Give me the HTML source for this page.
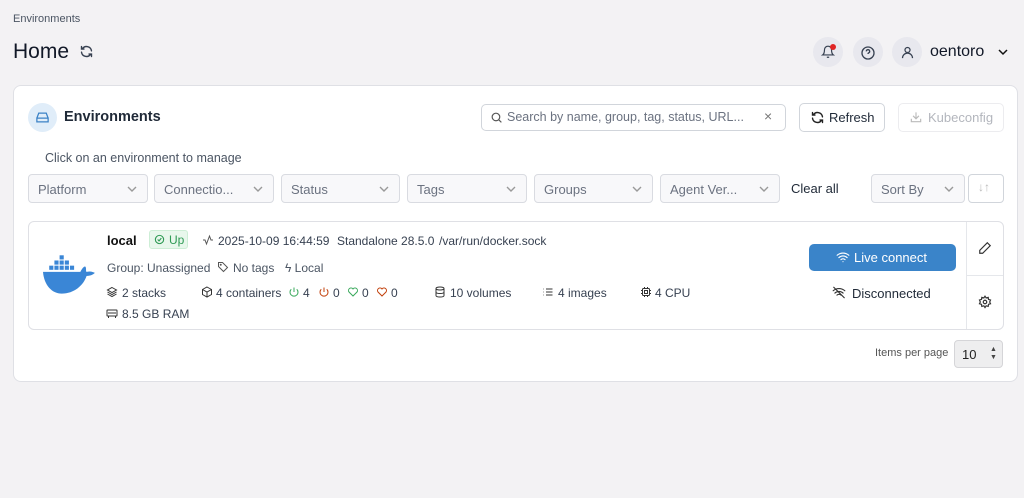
<!DOCTYPE html>
<html><head><meta charset="utf-8"><style>
*{box-sizing:border-box;margin:0;padding:0}
body{width:1024px;height:498px;background:#f3f2f4;font-family:"Liberation Sans",sans-serif;color:#1f2937;position:relative;overflow:hidden}
.a{position:absolute}
.sel{position:absolute;top:174px;height:29px;border:1px solid #d9dbe1;border-radius:4px;background:#f8f8fa;color:#6b7280;font-size:13px;padding:7px 9px;white-space:nowrap}
.sel svg{position:absolute;right:9px;top:9px}
.t{font-size:12px;color:#374151;white-space:nowrap}
.circ{position:absolute;width:30px;height:30px;border-radius:50%;background:#e8e8ee;top:37px}
svg{display:block}
</style></head><body>
<div class="a" style="left:13px;top:13px;font-size:11px;color:#4b5563">Environments</div>
<div class="a" style="left:13px;top:40px;font-size:21px;color:#111827">Home</div>
<svg class="a" style="left:79px;top:44px" width="15" height="15" viewBox="0 0 24 24" fill="none" stroke="#374151" stroke-width="2.2" stroke-linecap="round"><path d="M20 11A8 8 0 0 0 5.5 7.5M4 4v4h4M4 13a8 8 0 0 0 14.5 3.5M20 20v-4h-4"/></svg>
<div class="circ" style="left:813px"></div>
<svg class="a" style="left:821px;top:45px" width="14" height="14" viewBox="0 0 24 24" fill="none" stroke="#374151" stroke-width="2"><path d="M6 8a6 6 0 0 1 12 0c0 7 3 9 3 9H3s3-2 3-9M10 21h4"/></svg>
<div class="a" style="left:830px;top:44px;width:6px;height:6px;border-radius:50%;background:#e02424"></div>
<div class="circ" style="left:853px"></div>
<svg class="a" style="left:860px;top:45px" width="16" height="16" viewBox="0 0 24 24" fill="none" stroke="#374151" stroke-width="2"><circle cx="12" cy="12" r="9"/><path d="M9.5 9.5a2.5 2.5 0 1 1 3.5 2.3c-.7.3-1 .9-1 1.7M12 17h.01"/></svg>
<div class="circ" style="left:892px"></div>
<svg class="a" style="left:900px;top:45px" width="15" height="15" viewBox="0 0 24 24" fill="none" stroke="#374151" stroke-width="2"><circle cx="12" cy="8" r="4"/><path d="M4 21a8 8 0 0 1 16 0"/></svg>
<div class="a" style="left:930px;top:43px;font-size:16px;color:#111827">oentoro</div>
<svg class="a" style="left:997px;top:47px" width="12" height="10" viewBox="0 0 12 10" fill="none" stroke="#111" stroke-width="1.5"><path d="M2 3l4 4 4-4"/></svg>

<div class="a" style="left:13px;top:85px;width:1005px;height:297px;background:#fff;border:1px solid #dfe0e5;border-radius:8px"></div>
<div class="a" style="left:28px;top:103px;width:29px;height:29px;border-radius:50%;background:#e0edf9"></div>
<svg class="a" style="left:35px;top:110px" width="15" height="15" viewBox="0 0 24 24" fill="none" stroke="#3b82c6" stroke-width="2"><path d="M3 13h18v6H3zM3 13l3-8h12l3 8M7 16h.01M10 16h.01"/></svg>
<div class="a" style="left:64px;top:109px;font-size:14.5px;font-weight:bold;color:#1f2937">Environments</div>
<div class="a" style="left:481px;top:104px;width:305px;height:27px;border:1px solid #d1d5db;border-radius:5px"></div>
<svg class="a" style="left:490px;top:111px" width="13" height="13" viewBox="0 0 24 24" fill="none" stroke="#555" stroke-width="2.2"><circle cx="11" cy="11" r="7"/><path d="M16 16l5 5"/></svg>
<div class="a" style="left:507px;top:110px;font-size:12.5px;color:#6b7280">Search by name, group, tag, status, URL...</div>
<div class="a" style="left:764px;top:108px;font-size:14px;color:#777">×</div>
<div class="a" style="left:799px;top:103px;width:86px;height:29px;border:1px solid #d1d5db;border-radius:5px"></div>
<svg class="a" style="left:810px;top:110px" width="15" height="15" viewBox="0 0 24 24" fill="none" stroke="#222" stroke-width="2.2" stroke-linecap="round"><path d="M20 11A8 8 0 0 0 5.5 7.5M4 4v4h4M4 13a8 8 0 0 0 14.5 3.5M20 20v-4h-4"/></svg>
<div class="a" style="left:829px;top:110px;font-size:13px;color:#1f2937">Refresh</div>
<div class="a" style="left:898px;top:103px;width:106px;height:29px;border:1px solid #ececef;border-radius:5px"></div>
<svg class="a" style="left:909px;top:110px" width="14" height="14" viewBox="0 0 24 24" fill="none" stroke="#bbb" stroke-width="2"><path d="M4 15v5h16v-5M12 4v11M7 10l5 5 5-5"/></svg>
<div class="a" style="left:928px;top:110px;font-size:13px;color:#b3b6bd">Kubeconfig</div>
<div class="a" style="left:45px;top:151px;font-size:12.5px;color:#4b5563">Click on an environment to manage</div>

<div class="sel" style="left:28px;width:120px">Platform<svg width="12" height="10" viewBox="0 0 12 10" fill="none" stroke="#999" stroke-width="1.4"><path d="M2 3l4 4 4-4"/></svg></div>
<div class="sel" style="left:154px;width:120px">Connectio...<svg width="12" height="10" viewBox="0 0 12 10" fill="none" stroke="#999" stroke-width="1.4"><path d="M2 3l4 4 4-4"/></svg></div>
<div class="sel" style="left:281px;width:119px">Status<svg width="12" height="10" viewBox="0 0 12 10" fill="none" stroke="#999" stroke-width="1.4"><path d="M2 3l4 4 4-4"/></svg></div>
<div class="sel" style="left:407px;width:120px">Tags<svg width="12" height="10" viewBox="0 0 12 10" fill="none" stroke="#999" stroke-width="1.4"><path d="M2 3l4 4 4-4"/></svg></div>
<div class="sel" style="left:534px;width:119px">Groups<svg width="12" height="10" viewBox="0 0 12 10" fill="none" stroke="#999" stroke-width="1.4"><path d="M2 3l4 4 4-4"/></svg></div>
<div class="sel" style="left:660px;width:120px">Agent Ver...<svg width="12" height="10" viewBox="0 0 12 10" fill="none" stroke="#999" stroke-width="1.4"><path d="M2 3l4 4 4-4"/></svg></div>
<div class="a" style="left:791px;top:181px;font-size:13px;color:#1f2937">Clear all</div>
<div class="sel" style="left:871px;width:94px">Sort By<svg width="12" height="10" viewBox="0 0 12 10" fill="none" stroke="#999" stroke-width="1.4"><path d="M2 3l4 4 4-4"/></svg></div>
<div class="a" style="left:968px;top:174px;width:36px;height:29px;border:1px solid #d1d5db;border-radius:4px"></div>
<div class="a" style="left:978px;top:180px;font-size:12px;color:#bbb">↓↑</div>

<div class="a" style="left:28px;top:221px;width:976px;height:109px;border:1px solid #dfe0e5;border-radius:6px"></div>
<div class="a" style="left:966px;top:222px;width:1px;height:107px;background:#e5e7eb"></div>
<div class="a" style="left:967px;top:275px;width:36px;height:1px;background:#e5e7eb"></div>
<svg class="a" style="left:43px;top:255px" width="56" height="40" viewBox="0 0 54 38" fill="#3a86d6"><rect x="16" y="0" width="4" height="4"/><rect x="11" y="5" width="4" height="4"/><rect x="16" y="5" width="4" height="4"/><rect x="21" y="5" width="4" height="4"/><rect x="6" y="10" width="4" height="4"/><rect x="11" y="10" width="4" height="4"/><rect x="16" y="10" width="4" height="4"/><rect x="21" y="10" width="4" height="4"/><rect x="26" y="10" width="4" height="4"/><path d="M0 16h36c2-4 4-6 5-5 1 2 0 4 1 5 4-1 6 0 8 1-2 2-5 3-8 3-3 9-12 17-24 17C9 37 1 29 0 16z"/></svg>
<div class="a" style="left:107px;top:233px;font-size:13px;font-weight:bold;color:#111">local</div>
<div class="a" style="left:149px;top:230px;width:39px;height:19px;background:#e8f7ec;border:1px solid #cdeed6;border-radius:3px;font-size:12px;color:#2f9a55;padding:2px 0 0 19px">Up</div>
<svg class="a" style="left:154px;top:234px" width="11" height="11" viewBox="0 0 24 24" fill="none" stroke="#2f9a55" stroke-width="2.4"><circle cx="12" cy="12" r="9"/><path d="M8 12l3 3 5-6"/></svg>
<svg class="a" style="left:202px;top:234px" width="12" height="12" viewBox="0 0 24 24" fill="none" stroke="#555" stroke-width="2"><path d="M2 12h4l3 8 6-16 3 8h4"/></svg>
<div class="a t" style="left:218px;top:234px">2025-10-09 16:44:59</div>
<div class="a t" style="left:337px;top:234px">Standalone 28.5.0</div>
<div class="a t" style="left:439px;top:234px">/var/run/docker.sock</div>
<div class="a t" style="left:107px;top:261px;color:#4b5563">Group: Unassigned</div>
<svg class="a" style="left:217px;top:261px" width="12" height="12" viewBox="0 0 24 24" fill="none" stroke="#555" stroke-width="2"><path d="M3 3h8l10 10-8 8L3 11z"/><circle cx="7.5" cy="7.5" r="1"/></svg>
<div class="a t" style="left:233px;top:261px;color:#4b5563">No tags</div>
<div class="a t" style="left:285px;top:261px;color:#4b5563">ϟ Local</div>
<svg class="a" style="left:106px;top:286px" width="12" height="12" viewBox="0 0 24 24" fill="none" stroke="#333" stroke-width="2"><path d="M12 3l9 5-9 5-9-5zM3 12l9 5 9-5M3 16l9 5 9-5"/></svg>
<div class="a t" style="left:122px;top:286px">2 stacks</div>
<svg class="a" style="left:201px;top:286px" width="12" height="12" viewBox="0 0 24 24" fill="none" stroke="#333" stroke-width="2"><path d="M12 2l9 5v10l-9 5-9-5V7zM3 7l9 5 9-5M12 12v10"/></svg>
<div class="a t" style="left:216px;top:286px">4 containers</div>
<svg class="a" style="left:288px;top:286px" width="12" height="12" viewBox="0 0 24 24" fill="none" stroke="#3aa95c" stroke-width="2"><path d="M12 3v9M6.5 6.5a8 8 0 1 0 11 0"/></svg>
<div class="a t" style="left:303px;top:286px">4</div>
<svg class="a" style="left:318px;top:286px" width="12" height="12" viewBox="0 0 24 24" fill="none" stroke="#c2410c" stroke-width="2"><path d="M12 3v9M6.5 6.5a8 8 0 1 0 11 0"/></svg>
<div class="a t" style="left:333px;top:286px">0</div>
<svg class="a" style="left:347px;top:286px" width="12" height="12" viewBox="0 0 24 24" fill="none" stroke="#3aa95c" stroke-width="2"><path d="M12 20l-8-8a5 5 0 0 1 8-6 5 5 0 0 1 8 6z"/></svg>
<div class="a t" style="left:362px;top:286px">0</div>
<svg class="a" style="left:376px;top:286px" width="12" height="12" viewBox="0 0 24 24" fill="none" stroke="#c2410c" stroke-width="2"><path d="M12 20l-8-8a5 5 0 0 1 8-6 5 5 0 0 1 8 6z"/></svg>
<div class="a t" style="left:391px;top:286px">0</div>
<svg class="a" style="left:434px;top:286px" width="12" height="12" viewBox="0 0 24 24" fill="none" stroke="#333" stroke-width="2"><ellipse cx="12" cy="5" rx="8" ry="3"/><path d="M4 5v14c0 2 4 3 8 3s8-1 8-3V5M4 12c0 2 4 3 8 3s8-1 8-3"/></svg>
<div class="a t" style="left:450px;top:286px">10 volumes</div>
<svg class="a" style="left:542px;top:286px" width="12" height="12" viewBox="0 0 24 24" fill="none" stroke="#333" stroke-width="2"><path d="M8 6h13M8 12h13M8 18h13M3 6h1M3 12h1M3 18h1"/></svg>
<div class="a t" style="left:558px;top:286px">4 images</div>
<svg class="a" style="left:640px;top:286px" width="12" height="12" viewBox="0 0 24 24" fill="none" stroke="#333" stroke-width="2"><rect x="5" y="5" width="14" height="14" rx="2"/><rect x="9" y="9" width="6" height="6"/><path d="M9 2v3M15 2v3M9 19v3M15 19v3M2 9h3M2 15h3M19 9h3M19 15h3"/></svg>
<div class="a t" style="left:655px;top:286px">4 CPU</div>
<svg class="a" style="left:106px;top:308px" width="12" height="11" viewBox="0 0 24 22" fill="none" stroke="#333" stroke-width="2"><rect x="2" y="4" width="20" height="12" rx="1"/><path d="M6 8v4M10 8v4M14 8v4M18 8v4M5 16v4M19 16v4"/></svg>
<div class="a t" style="left:122px;top:307px">8.5 GB RAM</div>

<div class="a" style="left:809px;top:244px;width:147px;height:27px;background:#3a84c9;border-radius:5px;color:#fff;font-size:13px;padding:6px 0 0 45px">Live connect</div>
<svg class="a" style="left:836px;top:251px" width="14" height="12" viewBox="0 0 24 20" fill="none" stroke="#fff" stroke-width="2" stroke-linecap="round"><path d="M2 7a15 15 0 0 1 20 0M5 11a10 10 0 0 1 14 0M8.5 14.5a5 5 0 0 1 7 0M12 18h.01"/></svg>
<svg class="a" style="left:832px;top:286px" width="14" height="13" viewBox="0 0 24 22" fill="none" stroke="#333" stroke-width="2" stroke-linecap="round"><path d="M2 8a15 15 0 0 1 20 0M5 12a10 10 0 0 1 14 0M8.5 15.5a5 5 0 0 1 7 0M3 2l18 18"/></svg>
<div class="a" style="left:852px;top:286px;font-size:13px;color:#1f2937">Disconnected</div>
<svg class="a" style="left:978px;top:241px" width="14" height="14" viewBox="0 0 24 24" fill="none" stroke="#333" stroke-width="2"><path d="M16 3l5 5L8 21H3v-5z"/></svg>
<svg class="a" style="left:978px;top:295px" width="14" height="14" viewBox="0 0 24 24" fill="none" stroke="#333" stroke-width="2"><circle cx="12" cy="12" r="3"/><path d="M12 2l2 3 3.5-1 .5 3.5 3.5 1-1.5 3.5 1.5 3-3.5 1-.5 3.5-3.5-1-2 3-2-3-3.5 1-.5-3.5-3.5-1 1.5-3-1.5-3.5 3.5-1 .5-3.5 3.5 1z"/></svg>

<div class="a" style="left:875px;top:347px;font-size:11px;color:#555">Items per page</div>
<div class="a" style="left:954px;top:340px;width:49px;height:28px;background:#eeeeef;border:1px solid #d5d5d8;border-radius:4px;font-size:13px;padding:6px 0 0 7px;color:#222">10</div>
<div class="a" style="left:990px;top:346px;font-size:7px;line-height:8px;color:#444">▲<br>▼</div>
</body></html>
